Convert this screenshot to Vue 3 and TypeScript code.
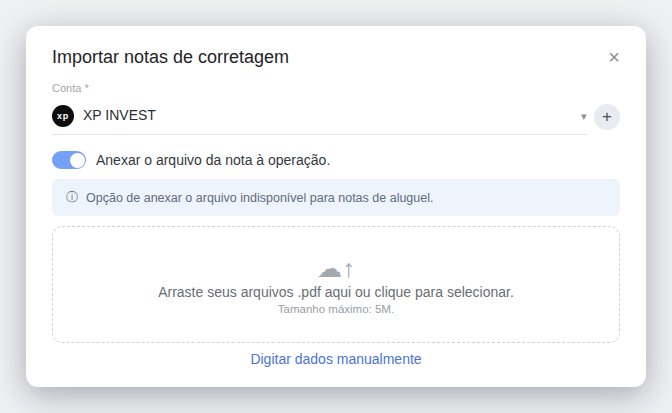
<script setup lang="ts">
const title = 'Importar notas de corretagem'
</script>

<template>
  <div class="page">
    <section class="modal">
      <header class="head">
        <h2>{{ title }}</h2>
        <button class="close">×</button>
      </header>
      <label class="lbl">Conta *</label>
      <div class="account">
        <div class="select">
          <span class="logo">xp</span>
          <span class="name">XP INVEST</span>
          <span class="caret">▾</span>
        </div>
        <button class="add">+</button>
      </div>
      <div class="toggle-row">
        <span class="toggle"><span class="knob"></span></span>
        <span>Anexar o arquivo da nota à operação.</span>
      </div>
      <div class="info"><span class="i">ⓘ</span><span>Opção de anexar o arquivo indisponível para notas de aluguel.</span></div>
      <div class="drop">
        <div class="cloud">☁↑</div>
        <div class="main">Arraste seus arquivos .pdf aqui ou clique para selecionar.</div>
        <div class="sub">Tamanho máximo: 5M.</div>
      </div>
      <a class="manual">Digitar dados manualmente</a>
    </section>
  </div>
</template>

<style>
html, body { margin: 0; }
</style>
<style scoped>
.page {
  width: 672px; height: 413px; box-sizing: border-box; padding-top: 26px; padding-left: 26px;
  background: #eff0f2; overflow: hidden;
  font-family: "Liberation Sans", Arial, sans-serif;
}
.modal {
  width: 620px; height: 361px; box-sizing: border-box; background: #fff; border-radius: 12px;
  padding: 18px 26px 0;
  box-shadow: 0 8px 32px rgba(15, 23, 42, 0.32);
  display: flex; flex-direction: column;
}
.head { display: flex; justify-content: space-between; align-items: center; height: 26px; }
h2 { margin: 0; font-size: 18px; font-weight: 400; color: #1f2328; line-height: 26px; }
.close { border: 0; background: none; padding: 0; width: 12px; color: #8a8e95; font-size: 20px; line-height: 26px; font-family: inherit; }
.lbl { font-size: 11px; color: #a2a6ad; margin-top: 12px; line-height: 13px; }
.account { display: flex; align-items: flex-start; gap: 7px; margin-top: 3px; }
.select { flex: 1; display: flex; align-items: center; height: 37px; box-sizing: border-box; border-bottom: 1px solid #e1e3e7; }
.logo { width: 22px; height: 22px; border-radius: 50%; background: #0d0d0d; color: #fff; font-size: 9px; font-weight: 700; display: flex; align-items: center; justify-content: center; letter-spacing: .7px; }
.name { margin-left: 9px; font-size: 14px; color: #2a2e34; flex: 1; margin-bottom: 2px; }
.caret { font-size: 11px; color: #8c9097; }
.add { width: 26px; height: 26px; border-radius: 50%; border: 0; background: #e9ebf1; color: #4a4f58; font-size: 17px; padding: 0; font-family: inherit; line-height: 26px; margin-top: 6px; }
.toggle-row { display: flex; align-items: center; gap: 10px; margin-top: 15px; font-size: 14px; color: #34383f; height: 20px; }
.toggle { width: 34px; height: 18px; border-radius: 9px; background: #74a0f5; position: relative; display: block; }
.knob { position: absolute; right: 1.5px; top: 1.5px; width: 15px; height: 15px; border-radius: 50%; background: #fff; }
.info { margin-top: 9px; height: 37px; box-sizing: border-box; background: #eef4fb; border-radius: 6px; display: flex; align-items: center; padding: 0 14px; font-size: 12.5px; color: #5f6b80; gap: 8px; }
.i { font-size: 12px; }
.drop { margin-top: 10px; height: 117px; box-sizing: border-box; border: 1px dashed #cfd2d7; border-radius: 10px; display: flex; flex-direction: column; align-items: center; padding-top: 26px; }
.cloud { font-size: 25px; line-height: 30px; color: #a4a8af; }
.main { font-size: 14px; color: #6a6e75; line-height: 16px; margin-top: 1px; }
.sub { font-size: 11.5px; color: #9a9ea5; line-height: 15px; margin-top: 2px; }
.manual { text-align: center; margin-top: 7px; color: #4a74d6; font-size: 14px; line-height: 18px; }
</style>
